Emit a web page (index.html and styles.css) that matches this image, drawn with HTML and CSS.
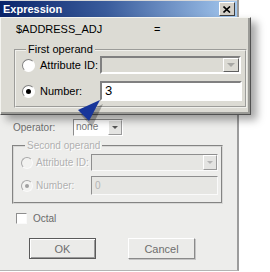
FILE: index.html
```html
<!DOCTYPE html>
<html lang="en">
<head>
    <meta charset="UTF-8">
    <title>Expression</title>
    <link rel="stylesheet" href="styles.css">
</head>
<body>
    <div class="stage">
        <!-- Faded dialog in the background -->
        <div class="dialog">
            <div class="titlebar">
                <span class="title">Expression</span>
                <span class="close">
                    <svg width="8" height="7" viewBox="0 0 8 7"><path d="M0.5 0.5 L7 6.5 M7 0.5 L0.5 6.5" stroke="#000" stroke-width="1.6"/></svg>
                </span>
            </div>
            <div class="dialog-body">
                <div class="operator-row">
                    <span class="op-label">Operator:</span>
                    <div class="combo op-combo">
                        <span class="combo-value">none</span>
                        <span class="combo-btn"><span class="arrow"></span></span>
                    </div>
                </div>

                <fieldset class="group faded-group">
                    <legend>Second operand</legend>
                    <div class="field-row">
                        <span class="radio"></span>
                        <span class="field-label">Attribute ID:</span>
                        <div class="combo off-combo">
                            <span class="combo-value"></span>
                            <span class="combo-btn"><span class="arrow"></span></span>
                        </div>
                    </div>
                    <div class="field-row">
                        <span class="radio checked"></span>
                        <span class="field-label">Number:</span>
                        <div class="textbox off-text">0</div>
                    </div>
                </fieldset>

                <div class="check-row">
                    <span class="checkbox"></span>
                    <span>Octal</span>
                </div>

                <div class="button-row">
                    <div class="btn ok">OK</div>
                    <div class="btn cancel">Cancel</div>
                </div>
            </div>
        </div>

        <!-- Magnified callout over the dialog -->
        <div class="callout">
            <div class="expr-row">
                <span class="expr-name">$ADDRESS_ADJ</span>
                <span class="expr-eq">=</span>
            </div>
            <fieldset class="group big-group">
                <legend>First operand</legend>
                <div class="big-row">
                    <span class="radio big-radio"></span>
                    <span class="big-label">Attribute ID:</span>
                    <div class="combo big-combo">
                        <span class="combo-value"></span>
                        <span class="combo-btn"><span class="arrow"></span></span>
                    </div>
                </div>
                <div class="big-row">
                    <span class="radio big-radio checked"></span>
                    <span class="big-label">Number:</span>
                    <div class="textbox big-text">3</div>
                </div>
            </fieldset>
        </div>

        <svg class="pointer" width="270" height="272" viewBox="0 0 270 272">
            <polygon points="103,104 81,115 92,127" fill="rgba(0,0,0,0.28)"/>
            <polygon points="100,100 78,110 89,121" fill="#17359a"/>
        </svg>
    </div>
</body>
</html>
```

FILE: styles.css
```css
/* Page */
body {
    margin: 0;
    background-color: #fff;
    font-family: "Liberation Sans", Arial, sans-serif;
}

.stage {
    position: relative;
    width: 270px;
    height: 272px;
    overflow: hidden;
}

/* Background dialog (washed out) */
.dialog {
    width: 239px;
    height: 271px;
    box-sizing: border-box;
    background-color: #ededeb;
    border-right: 2px solid #9c9c9c;
    border-bottom: 1px solid #b4b4b4;
    display: flex;
    flex-direction: column;
}

.titlebar {
    height: 17px;
    flex-shrink: 0;
    box-sizing: border-box;
    border-top: 1px solid #d8d8d8;
    background: linear-gradient(to right, #0a246a, #3a5c9c 45%, #a6caf0);
    display: flex;
    align-items: center;
    justify-content: space-between;
    padding: 0 2px 0 3px;
}

.title {
    color: #fff;
    font-weight: bold;
    font-size: 11px;
}

.close {
    width: 14px;
    height: 12px;
    background-color: #d4d0c8;
    border: 1px solid;
    border-color: #fff #404040 #404040 #fff;
    display: flex;
    align-items: center;
    justify-content: center;
}

.dialog-body {
    padding: 102px 0 0 12px;
    font-size: 10px;
    color: #6e6e6e;
    display: flex;
    flex-direction: column;
}

.operator-row {
    display: flex;
    align-items: center;
    height: 17px;
}

.op-label {
    width: 60px;
    padding-left: 1px;
}

/* Combo boxes */
.combo {
    box-sizing: border-box;
    display: flex;
    border: 1px solid;
    border-color: #8c8c8c #fff #fff #8c8c8c;
}

.combo-value {
    flex: 1;
    padding-left: 2px;
    line-height: 14px;
}

.combo-btn {
    width: 14px;
    box-sizing: border-box;
    background-color: #e4e4e2;
    border: 1px solid;
    border-color: #fff #9a9a9a #9a9a9a #fff;
    display: flex;
    align-items: center;
    justify-content: center;
}

.arrow {
    width: 0;
    height: 0;
    border-left: 3px solid transparent;
    border-right: 3px solid transparent;
    border-top: 3px solid #555;
}

.op-combo {
    width: 50px;
    height: 17px;
    background-color: #fff;
}

.op-combo .combo-value {
    color: #777;
}

/* Group boxes */
.group {
    margin: 0;
    border: 2px groove #f4f4f2;
}

.group legend {
    padding: 0 2px;
}

.faded-group {
    width: 207px;
    box-sizing: border-box;
    margin-top: 4px;
    padding: 2px 3px 7px 7px;
    color: #b0b0b0;
    border-color: #d8d8d6;
}

.faded-group legend {
    margin-left: 4px;
    line-height: 12px;
    text-shadow: 1px 1px 0 #fff;
}

.field-row {
    display: flex;
    align-items: center;
}

.field-row + .field-row {
    margin-top: 5px;
}

.field-label {
    width: 55px;
    text-shadow: 1px 1px 0 #fff;
}

.off-combo {
    width: 127px;
    height: 17px;
    background-color: #e6e6e3;
    border-color: #8e8e8e #fafafa #fafafa #8e8e8e;
}

.off-combo .arrow {
    border-top-color: #b4b4b4;
}

.textbox {
    box-sizing: border-box;
    border: 1px solid;
    border-color: #8e8e8e #fafafa #fafafa #8e8e8e;
    padding-left: 3px;
}

.off-text {
    width: 127px;
    height: 19px;
    line-height: 17px;
    background-color: #e6e6e3;
    color: #b4b4b4;
}

/* Radio buttons and checkbox */
.radio {
    width: 10px;
    height: 10px;
    flex-shrink: 0;
    margin-right: 3px;
    border-radius: 50%;
    border: 1px solid;
    border-color: #a8a8a8 #fafafa #fafafa #a8a8a8;
    background-color: #f2f2f0;
    display: flex;
    align-items: center;
    justify-content: center;
}

.radio.checked::after {
    content: "";
    width: 4px;
    height: 4px;
    border-radius: 50%;
    background-color: #a0a0a0;
}

.check-row {
    display: flex;
    align-items: center;
    gap: 6px;
    margin: 9px 0 0 4px;
    color: #6a6a6a;
}

.checkbox {
    width: 9px;
    height: 9px;
    border: 1px solid;
    border-color: #8e8e8e #fafafa #fafafa #8e8e8e;
    background-color: #fff;
}

/* Buttons */
.button-row {
    display: flex;
    gap: 32px;
    margin: 14px 0 0 17px;
}

.btn {
    width: 67px;
    height: 21px;
    box-sizing: border-box;
    border: 1px solid;
    border-color: #fff #8a8a8a #8a8a8a #fff;
    box-shadow: 1px 1px 0 #c4c4c4;
    background-color: #ebebe9;
    color: #6e6e6e;
    font-size: 11px;
    display: flex;
    align-items: center;
    justify-content: center;
}

.btn.ok {
    border-color: #5a5a5a;
    box-shadow: inset 1px 1px 0 #fff, inset -1px -1px 0 #9a9a9a;
}

/* Magnified callout */
.callout {
    position: absolute;
    left: 0;
    top: 17px;
    width: 251px;
    height: 98px;
    box-sizing: border-box;
    background-color: #dcdbd4;
    border: 1px solid;
    border-color: #f4f4f0 #505050 #505050 #f4f4f0;
    box-shadow: inset -2px -2px 0 #9a9a96, 6px 5px 8px rgba(0, 0, 0, 0.35);
    padding: 4px 0 0 13px;
    font-size: 11px;
    color: #000;
}

.expr-row {
    display: flex;
    align-items: center;
    height: 14px;
    padding-left: 2px;
}

.expr-name {
    width: 138px;
}

.big-group {
    width: 231px;
    box-sizing: border-box;
    margin-top: 7px;
    padding: 0 3px 5px 6px;
    border-color: #f0f0ec;
}

.big-group legend {
    margin-left: 4px;
    line-height: 13px;
}

.big-row {
    display: flex;
    align-items: center;
}

.big-row + .big-row {
    margin-top: 7px;
}

.big-radio {
    width: 11px;
    height: 11px;
    margin-right: 5px;
    border-color: #808080 #fff #fff #808080;
    background-color: #fff;
}

.big-radio.checked::after {
    width: 5px;
    height: 5px;
    background-color: #000;
}

.big-label {
    width: 60px;
}

.big-combo {
    width: 141px;
    height: 18px;
    border: 2px solid;
    border-color: #808080 #fff #fff #808080;
    background-color: #dcdbd4;
}

.big-combo .combo-btn {
    width: 16px;
    background-color: #dcdbd4;
    border-color: #fff #606060 #606060 #fff;
}

.big-combo .arrow {
    border-top-color: #a8a8a4;
    border-left-width: 4px;
    border-right-width: 4px;
    border-top-width: 4px;
}

.big-text {
    width: 142px;
    height: 20px;
    line-height: 16px;
    border: 2px solid;
    border-color: #808080 #fff #fff #808080;
    background-color: #fff;
    font-size: 13px;
}

.pointer {
    position: absolute;
    left: 0;
    top: 0;
}
```
